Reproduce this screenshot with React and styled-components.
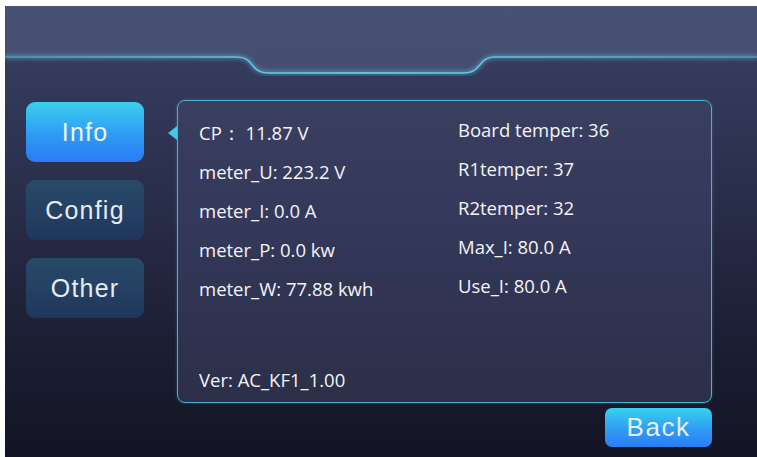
import React from "react";
import styled, { createGlobalStyle } from "styled-components";

const GlobalStyle = createGlobalStyle`
  html, body {
    margin: 0;
    padding: 0;
    background: #ffffff;
  }
`;

const Screen = styled.div`
  margin: 6px 0 0 5px;
  width: 752px;
  height: 451px;
  overflow: hidden;
  background: linear-gradient(
    180deg,
    #3a4064 0px,
    #343a5b 70px,
    #2a2f4c 180px,
    #1d2036 320px,
    #131524 451px
  );
  font-family: "Liberation Sans", Arial, sans-serif;
`;

const Header = styled.div`
  height: 70px;
  svg {
    display: block;
  }
`;

const Main = styled.div`
  display: flex;
  padding: 24px 0 0 21px;
`;

const Sidebar = styled.div`
  display: flex;
  flex-direction: column;
  gap: 18px;
  margin-top: 2px;
`;

const NavButton = styled.div`
  width: 118px;
  height: 60px;
  border-radius: 9px;
  display: flex;
  align-items: center;
  justify-content: center;
  font-size: 25px;
  letter-spacing: 1.2px;
  color: ${(p) => (p.$active ? "#eef6ff" : "#e6ecf4")};
  background: ${(p) =>
    p.$active
      ? "linear-gradient(180deg, #3ad0ee 0%, #2f9af4 55%, #2a7cf6 100%)"
      : "linear-gradient(180deg, #284a68 0%, #243f62 60%, #1f365c 100%)"};
`;

const Right = styled.div`
  display: flex;
  flex-direction: column;
  align-items: flex-end;
  margin-left: 33px;
  width: 535px;
`;

const Panel = styled.div`
  position: relative;
  box-sizing: border-box;
  width: 535px;
  height: 303px;
  border: 1px solid #4cb3cf;
  border-radius: 8px;
  background: linear-gradient(180deg, #3a3f60 0%, #34385a 40%, #2c2f48 100%);
  box-shadow: 0 0 3px rgba(80, 190, 220, 0.35);
  padding: 12px 0 3px 21px;
  display: flex;
  flex-direction: column;
  font-family: "Open Sans", "Noto Sans", sans-serif;
  font-size: 18.5px;
  color: #f2f4f8;

  &::before {
    content: "";
    position: absolute;
    left: -10px;
    top: 25px;
    border-style: solid;
    border-width: 7px 9px 7px 0;
    border-color: transparent #3fc9e8 transparent transparent;
  }
`;

const Columns = styled.div`
  display: grid;
  grid-template-columns: 259px 1fr;
`;

const Column = styled.div`
  display: flex;
  flex-direction: column;
  margin-top: ${(p) => p.$shift || 0}px;
`;

const Line = styled.div`
  line-height: 39px;
  height: 39px;
  white-space: nowrap;
`;

const Version = styled(Line)`
  margin-top: auto;
`;

const BackButton = styled.div`
  margin-top: 5px;
  width: 107px;
  height: 39px;
  border-radius: 7px;
  display: flex;
  align-items: center;
  justify-content: center;
  font-size: 26px;
  letter-spacing: 1.5px;
  color: #e4f2ff;
  background: linear-gradient(180deg, #38d2ee 0%, #2f9cf4 55%, #2a7df6 100%);
`;

const curve =
  "M0 51 H232 C250 51 244 67 264 67 H458 C478 67 472 51 490 51 H752";

const HeaderArt = () => (
  <svg width="752" height="70" viewBox="0 0 752 70">
    <defs>
      <linearGradient id="top" x1="0" y1="0" x2="0" y2="1">
        <stop offset="0" stopColor="#485073" />
        <stop offset="1" stopColor="#454d70" />
      </linearGradient>
      <linearGradient id="glow" x1="0" y1="0" x2="1" y2="0">
        <stop offset="0" stopColor="#4f95b8" />
        <stop offset="0.35" stopColor="#5ccbe6" />
        <stop offset="0.48" stopColor="#6fdcf2" />
        <stop offset="0.62" stopColor="#5ccbe6" />
        <stop offset="1" stopColor="#4f95b8" />
      </linearGradient>
      <filter id="blur" x="-10%" y="-100%" width="120%" height="300%">
        <feGaussianBlur stdDeviation="2" />
      </filter>
    </defs>
    <path d={`${curve} V0 H0 Z`} fill="url(#top)" />
    <path
      d={curve}
      fill="none"
      stroke="#5fd2ee"
      strokeWidth="4"
      opacity="0.45"
      filter="url(#blur)"
    />
    <path d={curve} fill="none" stroke="url(#glow)" strokeWidth="1.6" />
  </svg>
);

const left = [
  "CP：  11.87 V",
  "meter_U: 223.2 V",
  "meter_I: 0.0 A",
  "meter_P: 0.0 kw",
  "meter_W: 77.88 kwh",
];

const right = [
  "Board temper: 36",
  "R1temper: 37",
  "R2temper: 32",
  "Max_I: 80.0 A",
  "Use_I: 80.0 A",
];

const App = () => {
  return (
    <>
      <GlobalStyle />
      <Screen>
        <Header>
          <HeaderArt />
        </Header>
        <Main>
          <Sidebar>
            <NavButton $active>Info</NavButton>
            <NavButton>Config</NavButton>
            <NavButton>Other</NavButton>
          </Sidebar>
          <Right>
            <Panel>
              <Columns>
                <Column>
                  {left.map((t) => (
                    <Line key={t}>{t}</Line>
                  ))}
                </Column>
                <Column $shift={-3}>
                  {right.map((t) => (
                    <Line key={t}>{t}</Line>
                  ))}
                </Column>
              </Columns>
              <Version>Ver: AC_KF1_1.00</Version>
            </Panel>
            <BackButton>Back</BackButton>
          </Right>
        </Main>
      </Screen>
    </>
  );
};

export default App;
